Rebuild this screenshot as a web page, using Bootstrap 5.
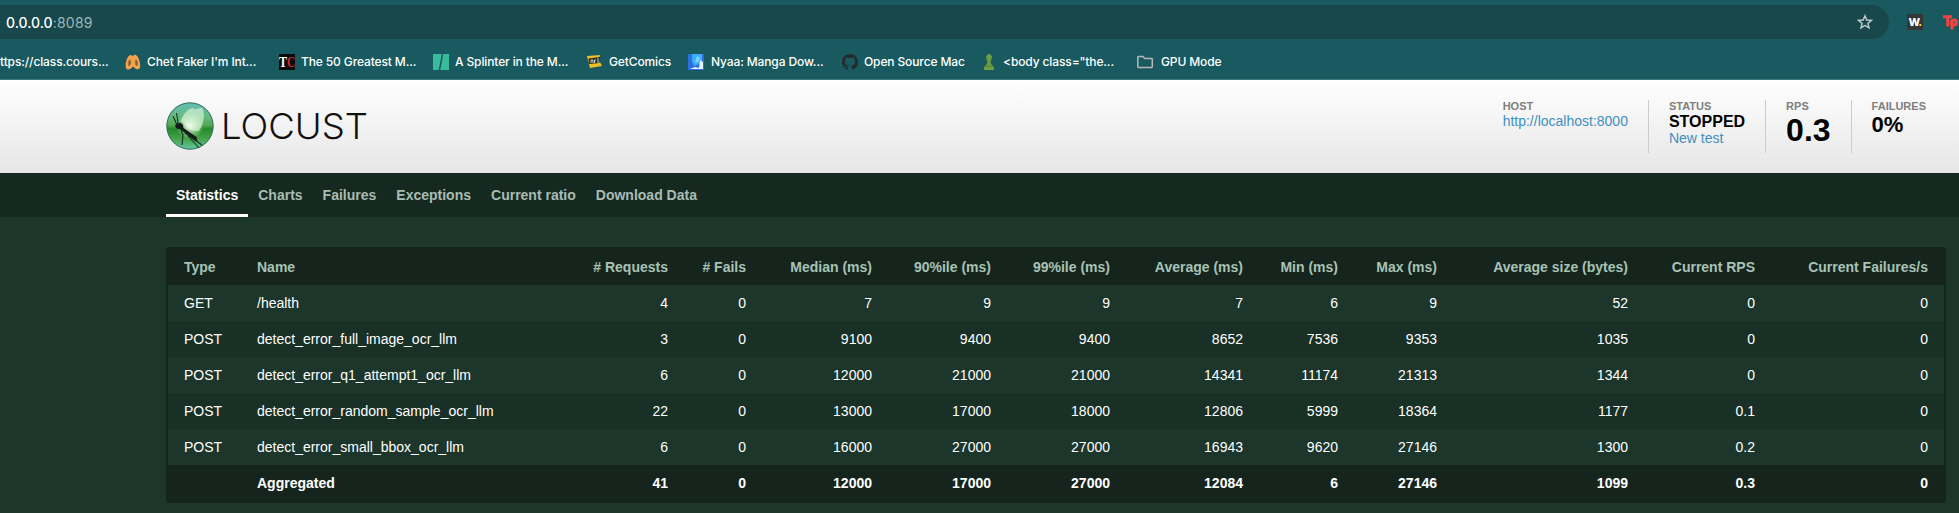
<!DOCTYPE html>
<html lang="en">
<head>
<meta charset="utf-8">
<title>Locust</title>
<link href="https://cdn.jsdelivr.net/npm/bootstrap@5.3.0/dist/css/bootstrap.min.css" rel="stylesheet">
<style>
body{background:#1c362b;font-family:"Liberation Sans",Arial,sans-serif;font-size:14px;overflow:hidden;height:513px}
svg{display:block;flex:none}
.browser{background:#185a5f;height:80px;border-bottom:1px solid #41797d;font-family:Inter,sans-serif;color:#fff}
.toolbar-row{padding-top:5px}
.address{width:1889px;height:34px;background:#18484c;border-radius:0 17px 17px 0;padding:0 16px 0 6px;font-size:14px;letter-spacing:.25px}
.address .host{font-weight:500;letter-spacing:0}
.address .port{color:#9fb5b7}
.ext-w{width:16px;height:16px;margin-left:18px;background:#343638;font:800 11px/16px Inter,sans-serif;letter-spacing:-.8px}
.ext-w i{color:#e5df3c;font-style:normal}
.ext-tp{margin-left:20px}
.bookmarks{display:grid;grid-template-columns:125px 154px 154px 154px 101px 154px 139px 156px 100px;height:46px;font-size:12px;font-weight:500}
.bookmarks>div{display:flex;align-items:center;gap:6px;white-space:nowrap}
.bookmarks span{letter-spacing:-.12px}
.masthead{height:93px;background:linear-gradient(#fff,#e6e6e6);padding:0 13px 0 166px}
.stat-box{height:53px;padding:0 20px;border-left:1px solid #ccc;color:#000;font-weight:700}
.stat-box:first-child{border:0}
.stat-label{font-size:11px;line-height:13px;color:#7f7f7f}
.stat-box a{color:#3f8fc0;font-weight:400;text-decoration:none}
.stat-box a,.stat-state{display:block;line-height:17px}
.stat-state{font-size:16px}
.tabs-bar{height:44px;background:#162921;padding-left:166px}
.tabs-bar .nav-link{height:44px;padding:0 10px;line-height:44px;color:#a9bcb2;font-weight:700}
.tabs-bar .nav-link.active{color:#fff;border-bottom:3px solid #fff}
.stats-wrap{margin:30px 13px 0 166px;border:2px solid #15251e;border-width:0 2px;border-radius:3px;overflow:hidden;background:#15251e;height:256px}
.stats{table-layout:fixed;width:1776px;color:#fff;margin:0;line-height:20px}
.stats th,.stats td{padding:0 16px;height:36px;text-align:right;white-space:nowrap;vertical-align:middle}
.stats th:nth-child(-n+2),.stats td:nth-child(-n+2){text-align:left}
.stats thead th{height:38px;color:#a8c2b4;padding-top:2px}
.stats tbody tr{background:#1c362b}
.stats tbody tr:nth-child(even){background:#193027}
.stats tbody tr.total{background:#15251e;font-weight:700}
</style>
</head>
<body>
<header class="browser">
  <div class="toolbar-row d-flex align-items-center">
    <div class="address d-flex align-items-center justify-content-between">
      <div><span class="host">0.0.0.0</span><span class="port">:8089</span></div>
      <svg width="16" height="16" viewBox="0 0 16 16" fill="none" stroke="#c3cdce" stroke-width="1.4"><path d="M8 1.8l1.8 4.2 4.6.4-3.5 3 1.1 4.5L8 11.5l-4 2.4 1.1-4.5-3.5-3 4.6-.4z"/></svg>
    </div>
    <div class="ext-w text-center">W<i>.</i></div>
    <svg class="ext-tp" width="15" height="16" viewBox="0 0 15 16" fill="none" stroke="#f4433f" stroke-width="3"><path d="M0 2.8h9M4.8 2v10.500"/><path d="M9 15.500V8"/><circle cx="11" cy="8.500" r="2.500"/></svg>
  </div>
  <nav class="bookmarks">
    <div><span>ttps://class.cours...</span></div>
    <div><svg width="16" height="16" viewBox="0 0 16 16"><path d="M5.500 1C2.500 1.500.5 8 .6 12c0 4 3 4.200 5 2.800 1.400-1 1.500-2 2.400-2s1.200 1 2.400 1.800c2 1.400 4.800.8 4.800-2.600C15.200 8 13 1 10.200.8 8.800.7 8.500 2 7.800 2S6.800.8 5.500 1z" fill="#f7a44c"/><path d="M5 5.500c-2 2-2 5-1.300 6.500C6 11 6.500 8 5 5.500zm6 0C9.600 8 10 11 12.200 12c.8-2 .3-5-1.200-6.500z" fill="#80613a" stroke="#a86e38"/></svg><span>Chet Faker I'm Int...</span></div>
    <div><svg width="16" height="16"><rect width="16" height="16" fill="#090909"/><g font-family="Liberation Serif,serif" font-weight="700" font-size="15"><text x="0" y="13" fill="#fff" textLength="8" lengthAdjust="spacingAndGlyphs">T</text><text x="8" y="13" fill="#d22d37" textLength="8" lengthAdjust="spacingAndGlyphs">C</text></g></svg><span>The 50 Greatest M...</span></div>
    <div><svg width="16" height="16"><rect width="16" height="16" fill="#36bb9b"/><path d="M9.500 0L6.500 16" stroke="#185a5f" stroke-width="1.500"/></svg><span>A Splinter in the M...</span></div>
    <div><svg width="16" height="16"><path d="M0 2l13-1-1 5 3 6-12 2z" fill="#f2bd27"/><path d="M1.500 4.500L13 3l-.5 6-10.500 1z" fill="#24302e"/><path d="M4 9V6h2v3M7.500 9V6h1.500M11 4v5" stroke="#cad3bd" fill="none"/></svg><span>GetComics</span></div>
    <div><svg width="16" height="16"><rect width="16" height="16" fill="#2c70e0"/><path d="M4 0h10v6l-3 4-5 2-2-5z" fill="#3cafff"/><path d="M12 6l3 2v7H2l5-2 4 1z" fill="#e5f4ff"/><path d="M9 2l3 2-2 4-3 1z" fill="#87d3ff"/></svg><span style="margin-left:1px">Nyaa: Manga Dow...</span></div>
    <div><svg width="16" height="16" viewBox="0 0 16 16"><path fill="#24292f" d="M8 0C3.580 0 0 3.580 0 8c0 3.540 2.290 6.530 5.470 7.590.4.070.55-.17.55-.38 0-.19-.01-.82-.01-1.490-2.010.37-2.530-.49-2.690-.94-.09-.23-.48-.94-.82-1.130-.28-.15-.68-.52-.01-.53.63-.01 1.080.58 1.230.82.72 1.210 1.870.87 2.330.66.070-.52.28-.87.51-1.070-1.780-.2-3.640-.89-3.640-3.950 0-.87.31-1.590.82-2.150-.08-.2-.36-1.020.08-2.120 0 0 .67-.21 2.200.82A7.600 7.600 0 0 1 8 3.860c.68 0 1.360.09 2 .27 1.530-1.040 2.200-.82 2.200-.82.44 1.100.16 1.920.08 2.120.51.56.82 1.270.82 2.150 0 3.070-1.870 3.750-3.650 3.950.29.25.54.73.54 1.480 0 1.070-.01 1.930-.01 2.200 0 .21.15.46.55.38A8 8 0 0 0 16 8c0-4.420-3.580-8-8-8z"/></svg><span>Open Source Mac</span></div>
    <div><svg width="16" height="16"><path d="M6.500 6.500h-1V5.300h.8a2.800 2.800 0 1 1 3.400 0h.8v1.200h-1c0 2.500.8 4 2.500 5.500 1 1 1.200 2.500 1 4H3c-.2-1.500 0-3 1-4 1.700-1.500 2.500-3 2.500-5.500z" fill="#6c9f3e"/><path d="M4.500 12h7" stroke="#4d8136"/></svg><span>&lt;body class="the...</span></div>
    <div><svg width="17" height="16" fill="none" stroke="#b9b7b5" stroke-width="1.500"><path d="M1.500 2.500h4.300l2 2h6.800q.7 0 .7.700v7.600q0 .7-.7.700H1.600q-.8 0-.8-.7V3.200q0-.7.700-.7z"/></svg><span style="margin-left:1px">GPU Mode</span></div>
  </nav>
</header>

<section class="masthead d-flex justify-content-between">
  <svg width="210" height="93" viewBox="166 80 210 93">
    <defs>
      <linearGradient id="orb" x2="0" y2="1"><stop stop-color="#68bcb5"/><stop offset=".3" stop-color="#64ba80"/><stop offset=".48" stop-color="#55a753"/><stop offset=".56" stop-color="#268a2b"/><stop offset=".78" stop-color="#45a349"/><stop offset="1" stop-color="#65c7a3"/></linearGradient>
      <radialGradient id="glow"><stop stop-color="#fff"/><stop offset="1" stop-color="#c9f4bd" stop-opacity="0"/></radialGradient>
    </defs>
    <circle cx="190" cy="126" r="23.200" fill="url(#orb)" stroke="#2b6d5c"/>
    <ellipse cx="190" cy="126" rx="14" ry="13" fill="url(#glow)"/>
    <path d="M181 121c2-7 7-13 13-13 1 4-5 11-13 14zM182 121c4-7 12-13 20-13 4 7 1 17-3 23-7 1-13-3-17-10z" fill="#eafbe4" opacity=".6"/>
    <path d="M175 126c1-4 6-4 8-1l.5 3 13 9 1 4.500-3-1-14-11-4-1z" fill="#131c18"/>
    <path d="M178.500 125l-2-12M177 125l-4-9M181 130l2 5-1 10M185 133l17 12M188 136l11 12" stroke="#173126" stroke-width="1.100" fill="none"/>
    <text x="221" y="139" font-family="Inter,Lato,sans-serif" font-weight="300" font-size="36" fill="#111" textLength="147" lengthAdjust="spacingAndGlyphs">LOCUST</text>
  </svg>
  <div class="d-flex" style="margin-top:20px">
    <div class="stat-box"><div class="stat-label">HOST</div><a href="#">http://localhost:8000</a></div>
    <div class="stat-box"><div class="stat-label">STATUS</div><div class="stat-state">STOPPED</div><a href="#">New test</a></div>
    <div class="stat-box"><div class="stat-label">RPS</div><div style="font-size:32px;line-height:35px">0.3</div></div>
    <div class="stat-box"><div class="stat-label">FAILURES</div><div style="font-size:22px;line-height:24px">0%</div></div>
  </div>
</section>

<nav class="nav tabs-bar">
  <a class="nav-link active" href="#">Statistics</a><a class="nav-link" href="#">Charts</a><a class="nav-link" href="#">Failures</a><a class="nav-link" href="#">Exceptions</a><a class="nav-link" href="#">Current ratio</a><a class="nav-link" href="#">Download Data</a>
</nav>

<main class="stats-wrap">
<table class="stats">
<colgroup><col style="width:73px"><col style="width:336px"><col style="width:107px"><col style="width:78px"><col style="width:126px"><col style="width:119px"><col style="width:119px"><col style="width:133px"><col style="width:95px"><col style="width:99px"><col style="width:191px"><col style="width:127px"><col style="width:173px"></colgroup>
<thead><tr><th>Type</th><th>Name</th><th># Requests</th><th># Fails</th><th>Median (ms)</th><th>90%ile (ms)</th><th>99%ile (ms)</th><th>Average (ms)</th><th>Min (ms)</th><th>Max (ms)</th><th>Average size (bytes)</th><th>Current RPS</th><th>Current Failures/s</th></tr></thead>
<tbody>
<tr><td>GET</td><td>/health</td><td>4</td><td>0</td><td>7</td><td>9</td><td>9</td><td>7</td><td>6</td><td>9</td><td>52</td><td>0</td><td>0</td></tr>
<tr><td>POST</td><td>detect_error_full_image_ocr_llm</td><td>3</td><td>0</td><td>9100</td><td>9400</td><td>9400</td><td>8652</td><td>7536</td><td>9353</td><td>1035</td><td>0</td><td>0</td></tr>
<tr><td>POST</td><td>detect_error_q1_attempt1_ocr_llm</td><td>6</td><td>0</td><td>12000</td><td>21000</td><td>21000</td><td>14341</td><td>11174</td><td>21313</td><td>1344</td><td>0</td><td>0</td></tr>
<tr><td>POST</td><td>detect_error_random_sample_ocr_llm</td><td>22</td><td>0</td><td>13000</td><td>17000</td><td>18000</td><td>12806</td><td>5999</td><td>18364</td><td>1177</td><td>0.1</td><td>0</td></tr>
<tr><td>POST</td><td>detect_error_small_bbox_ocr_llm</td><td>6</td><td>0</td><td>16000</td><td>27000</td><td>27000</td><td>16943</td><td>9620</td><td>27146</td><td>1300</td><td>0.2</td><td>0</td></tr>
<tr class="total"><td></td><td>Aggregated</td><td>41</td><td>0</td><td>12000</td><td>17000</td><td>27000</td><td>12084</td><td>6</td><td>27146</td><td>1099</td><td>0.3</td><td>0</td></tr>
</tbody>
</table>
</main>
<script src="https://cdn.jsdelivr.net/npm/bootstrap@5.3.0/dist/js/bootstrap.bundle.min.js"></script>
</body>
</html>
